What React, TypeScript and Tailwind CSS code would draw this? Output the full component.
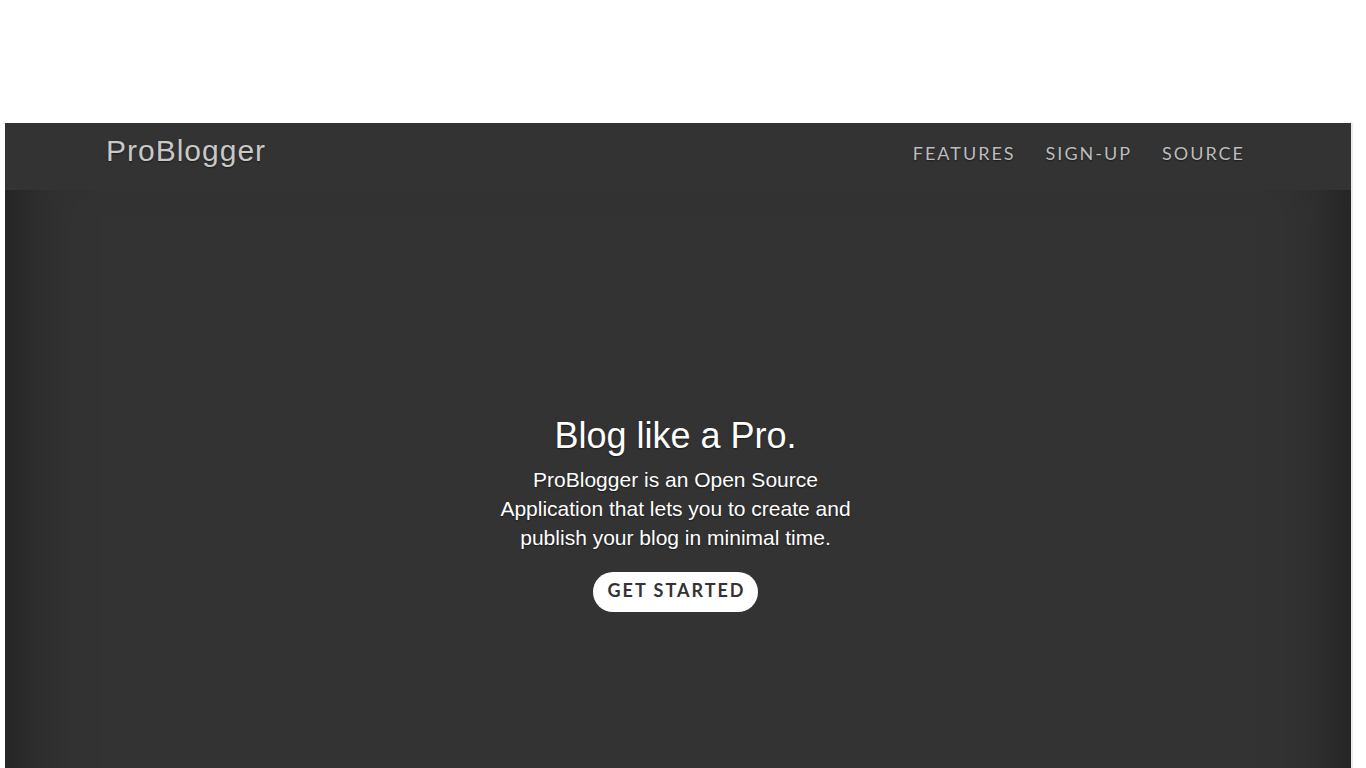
import React from 'react';

const navLinks = ['Features', 'Sign-up', 'Source'];

const App = () => {
  return (
    <div className="h-screen bg-white pt-[123px] pl-[5px] overflow-hidden">
      <div className="w-[1346px] h-[780px] bg-[#333333] shadow-[inset_0_0_5rem_rgba(0,0,0,0.5),2px_0_1px_rgba(0,0,0,0.08)] [text-shadow:0_0.05rem_0.1rem_rgba(0,0,0,0.5)]">
        {/* Navbar */}
        <header className="h-[67px] bg-[#333333]">
          <div className="w-[1140px] mx-auto h-full flex items-center justify-between pl-0 pr-[3px]">
            <span className="font-['Liberation_Sans',sans-serif] text-[30px] tracking-[1px] text-[#c8c8c8] -mt-[12px] -ml-[2px]">
              ProBlogger
            </span>
            <nav className="flex items-center gap-[30px] font-['Lato',sans-serif] text-[18px] tracking-[2px] uppercase text-[#bdbdbd] -mt-[6px]">
              {navLinks.map((link) => (
                <a key={link} href="#" className="hover:text-white">
                  {link}
                </a>
              ))}
            </nav>
          </div>
        </header>

        {/* Hero */}
        <main className="flex flex-col items-center pt-[226px] pr-[5px] text-white font-['Liberation_Sans',sans-serif]">
          <h1 className="text-[36px] leading-[40px]">Blog like a Pro.</h1>
          <p className="mt-[9px] w-[370px] text-center text-[21px] leading-[29px]">
            ProBlogger is an Open Source Application that lets you to create and publish your blog in minimal time.
          </p>
          <button className="mt-[20px] h-[40px] pb-[3px] pl-[14px] pr-[12px] rounded-full bg-white text-[#333333] font-['Lato',sans-serif] font-bold text-[18px] tracking-[2px] [text-shadow:none]">
            GET STARTED
          </button>
        </main>
      </div>
    </div>
  );
};

export default App;
